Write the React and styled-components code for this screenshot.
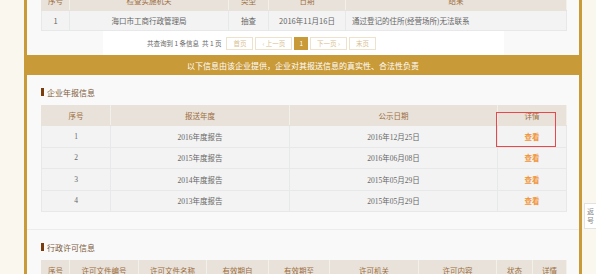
import React from "react";
import styled, { createGlobalStyle } from "styled-components";

const GOLD = "#c99a38";

const Global = createGlobalStyle`
  html, body {
    margin: 0;
    padding: 0;
    background: #faf7ef;
    overflow: hidden;
    font-family: "Noto Sans CJK SC", "Liberation Sans", sans-serif;
  }
`;

const Page = styled.div`
  width: 596px;
  height: 274px;
  overflow: hidden;
  padding-left: 24px;
  box-sizing: border-box;
`;

const Frame = styled.div`
  width: 558px;
  border-left: 3px solid ${GOLD};
  border-right: 3px solid ${GOLD};
  box-sizing: border-box;
  background: #f9f9f9;
`;

const Block = styled.div`
  padding: ${(p) => p.$pad || "0 13px 0 14px"};
  border-bottom: ${(p) => (p.$line ? "1px solid #ececec" : "none")};
`;

const Table = styled.table`
  width: 525px;
  border-collapse: collapse;
  table-layout: fixed;
  margin-top: ${(p) => p.$shift || "0"};
`;

const Th = styled.th`
  background: #e9e2da;
  color: #9b6d3e;
  font-weight: normal;
  font-size: 7.5px;
  height: 19px;
  padding: 0;
  border: 1px solid #e9e2da;
  border-right-color: #f3efe9;
  text-align: center;
`;

const Td = styled.td`
  background: #f3f3f3;
  color: #666;
  font-size: 7.5px;
  height: ${(p) => p.$h || "19px"};
  padding: 0 ${(p) => (p.$left ? "6px" : "0")};
  border: 1px solid #e6e8ea;
  text-align: ${(p) => (p.$left ? "left" : "center")};
  font-family: ${(p) =>
    p.$serif
      ? `"Liberation Serif", "Noto Sans CJK SC", serif`
      : `"Noto Sans CJK SC", "Liberation Sans", sans-serif`};
`;

const Link = styled.a`
  color: #f0953a;
  font-weight: bold;
  font-size: 7.5px;
  font-family: "Noto Sans CJK SC", sans-serif;
  text-decoration: none;
`;

const Pager = styled.div`
  width: 401px;
  height: 24px;
  margin: 0 auto;
  background: #fff;
  display: flex;
  align-items: center;
  padding-left: 44px;
  box-sizing: border-box;
  gap: 2px;
`;

const PagerInfo = styled.span`
  font-size: 6.5px;
  color: #666;
  margin-right: 3px;
  white-space: pre;
`;

const PageBtn = styled.span`
  display: inline-flex;
  align-items: center;
  justify-content: center;
  height: 13px;
  padding: 0 ${(p) => (p.$active ? "4px" : "6px")};
  font-size: 6.5px;
  border: 1px solid ${(p) => (p.$active ? GOLD : "#eee2cc")};
  background: ${(p) => (p.$active ? GOLD : "#fff")};
  color: ${(p) => (p.$active ? "#fff" : "#d8bf94")};
  box-sizing: border-box;
`;

const Notice = styled.div`
  height: 20px;
  background: ${GOLD};
  color: #fff;
  font-size: 8px;
  display: flex;
  align-items: center;
  justify-content: center;
  margin: 0 -3px;
`;

const Title = styled.div`
  display: flex;
  align-items: center;
  gap: 3px;
  height: 12px;
  margin: ${(p) => p.$m};
  font-size: 8px;
  color: #7d5a3a;
  &::before {
    content: "";
    width: 3px;
    height: 8px;
    background: #7a3c0c;
  }
`;

const TableWrap = styled.div`
  position: relative;
`;

const Highlight = styled.div`
  position: absolute;
  left: 455px;
  top: 7px;
  width: 60px;
  height: 35px;
  border: 1.5px solid #e8474c;
  box-sizing: border-box;
`;

const Side = styled.div`
  position: fixed;
  left: 584px;
  top: 203px;
  width: 20px;
  height: 26px;
  background: #fff;
  border: 1px solid #e2e2e2;
  font-size: 7px;
  color: #888;
  padding: 3px 2px;
  box-sizing: border-box;
  line-height: 9px;
`;

const reports = [
  ["1", "2016年度报告", "2016年12月25日"],
  ["2", "2015年度报告", "2016年06月08日"],
  ["3", "2014年度报告", "2015年05月29日"],
  ["4", "2013年度报告", "2015年05月29日"],
];

const licenseCols = [
  ["序号", 28],
  ["许可文件编号", 69],
  ["许可文件名称", 68],
  ["有效期自", 62],
  ["有效期至", 61],
  ["许可机关", 89],
  ["许可内容", 78],
  ["状态", 36],
  ["详情", 34],
];

export default function App() {
  return (
    <>
      <Global />
      <Page>
        <Frame>
          <Block>
            <Table $shift="-10px">
              <colgroup>
                <col style={{ width: 28 }} />
                <col style={{ width: 159 }} />
                <col style={{ width: 40 }} />
                <col style={{ width: 77 }} />
                <col style={{ width: 221 }} />
              </colgroup>
              <thead>
                <tr>
                  <Th>序号</Th>
                  <Th>检查实施机关</Th>
                  <Th>类型</Th>
                  <Th>日期</Th>
                  <Th>结果</Th>
                </tr>
              </thead>
              <tbody>
                <tr>
                  <Td>1</Td>
                  <Td>海口市工商行政管理局</Td>
                  <Td>抽查</Td>
                  <Td>2016年11月16日</Td>
                  <Td $left>通过登记的住所(经营场所)无法联系</Td>
                </tr>
              </tbody>
            </Table>
            <Pager>
              <PagerInfo>共查询到 1 条信息  共 1 页</PagerInfo>
              <PageBtn>首页</PageBtn>
              <PageBtn>‹ 上一页</PageBtn>
              <PageBtn $active>1</PageBtn>
              <PageBtn>下一页 ›</PageBtn>
              <PageBtn>末页</PageBtn>
            </Pager>
          </Block>
          <Notice>以下信息由该企业提供，企业对其报送信息的真实性、合法性负责</Notice>
          <Block $pad="0 13px 17px 14px" $line>
            <Title $m="11px 0 7px">企业年报信息</Title>
            <TableWrap>
              <Table>
                <colgroup>
                  <col style={{ width: 69 }} />
                  <col style={{ width: 179 }} />
                  <col style={{ width: 208 }} />
                  <col style={{ width: 69 }} />
                </colgroup>
                <thead>
                  <tr>
                    <Th>序号</Th>
                    <Th>报送年度</Th>
                    <Th>公示日期</Th>
                    <Th>详情</Th>
                  </tr>
                </thead>
                <tbody>
                  {reports.map((r) => (
                    <tr key={r[0]}>
                      <Td $serif $h="20.5px">{r[0]}</Td>
                      <Td $serif $h="20.5px">{r[1]}</Td>
                      <Td $serif $h="20.5px">{r[2]}</Td>
                      <Td $h="20.5px">
                        <Link href="#">查看</Link>
                      </Td>
                    </tr>
                  ))}
                </tbody>
              </Table>
              <Highlight />
            </TableWrap>
          </Block>
          <Block>
            <Title $m="11px 0 7px">行政许可信息</Title>
            <Table>
              <colgroup>
                {licenseCols.map(([n, w]) => (
                  <col key={n} style={{ width: w }} />
                ))}
              </colgroup>
              <thead>
                <tr>
                  {licenseCols.map(([n]) => (
                    <Th key={n}>{n}</Th>
                  ))}
                </tr>
              </thead>
            </Table>
          </Block>
        </Frame>
      </Page>
      <Side>
        返<br />号
      </Side>
    </>
  );
}
